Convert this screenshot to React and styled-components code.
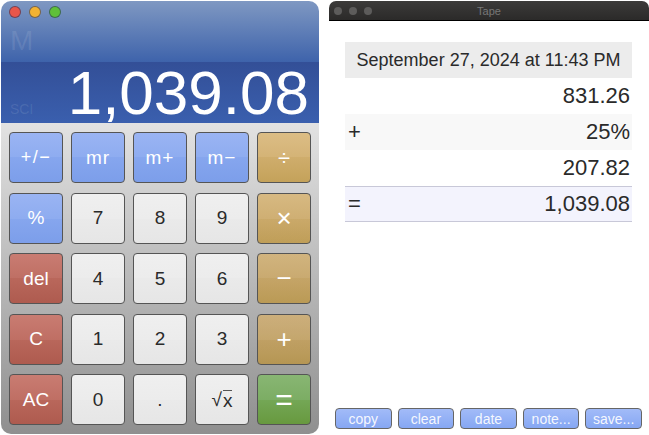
import React from 'react'
import styled, { createGlobalStyle } from 'styled-components'

const Global = createGlobalStyle`
  html, body {
    margin: 0;
    padding: 0;
    background: #fff;
    font-family: "Liberation Sans", Arial, sans-serif;
  }
  #root { width: 649px; height: 435px; overflow: hidden; }
`

const Page = styled.div`
  width: 649px;
  height: 435px;
  display: flex;
  align-items: flex-start;
  box-sizing: border-box;
  padding: 1px 0 0 1px;
  background: #fff;
`

const Calc = styled.div`
  width: 318px;
  height: 433px;
  flex: none;
  display: flex;
  flex-direction: column;
  border-radius: 10px;
  overflow: hidden;
`

const TitleArea = styled.div`
  height: 61px;
  flex: none;
  box-sizing: border-box;
  padding: 5px 8px 0;
  background: linear-gradient(#7f98c2, #3e63ab);
`

const Lights = styled.div`
  display: flex;
  gap: ${p => p.gap}px;
`

const Light = styled.span`
  width: ${p => p.size}px;
  height: ${p => p.size}px;
  border-radius: 50%;
  box-sizing: border-box;
  background: ${p => p.color};
  border: ${p => (p.ring ? '1px solid rgba(40,50,90,0.6)' : 'none')};
`

const MemoryFlag = styled.div`
  margin: 8px 0 0 1px;
  font-size: 28px;
  line-height: 29px;
  color: rgba(255, 255, 255, 0.1);
`

const Display = styled.div`
  height: 61px;
  flex: none;
  box-sizing: border-box;
  padding: 0 10px 0 8px;
  display: flex;
  justify-content: space-between;
  background: linear-gradient(#334f97, #3a5fae);
  overflow: hidden;
`

const SciFlag = styled.div`
  align-self: flex-end;
  margin: 0 0 6px 1px;
  font-size: 14px;
  line-height: 15px;
  color: rgba(255, 255, 255, 0.1);
`

const Value = styled.div`
  font-size: 62px;
  line-height: 62px;
  color: #fff;
`

const Keypad = styled.div`
  flex: 1;
  box-sizing: border-box;
  padding: 9px 9px 0 8px;
  display: grid;
  grid-template-columns: repeat(5, 54px);
  grid-auto-rows: 51px;
  column-gap: 8px;
  row-gap: 9.5px;
  background: linear-gradient(#e2e2e2, #8f8f8f);
`

const keyColors = {
  blue: ['#9ab4f3', '#8eacf0', '#86a6ee', '#7c9eea', '#fff'],
  gold: ['#dcbd85', '#d4b376', '#cfad6c', '#c4a25a', '#fff'],
  red: ['#c97c72', '#bf6f64', '#b9675b', '#ae5b4f', '#fff'],
  green: ['#88b673', '#7cad64', '#74a756', '#68993f', '#fff'],
  gray: ['#efefef', '#ececec', '#eaeaea', '#e6e6e6', '#2a2a2a'],
}

// the gold column darkens a little from row to row
const shade = p => (p.kind === 'gold' ? p.row * 0.025 : 0)

const Key = styled.div`
  display: flex;
  align-items: center;
  justify-content: center;
  box-sizing: border-box;
  border: 1px solid #555;
  border-radius: 4px;
  font-size: ${p => p.size || 19}px;
  letter-spacing: ${p => p.spacing || 0}px;
  color: ${p => keyColors[p.kind][4]};
  background:
    linear-gradient(rgba(0, 0, 0, ${shade}), rgba(0, 0, 0, ${shade})),
    linear-gradient(
      ${p => keyColors[p.kind][0]},
      ${p => keyColors[p.kind][1]} 50%,
      ${p => keyColors[p.kind][2]} 50%,
      ${p => keyColors[p.kind][3]}
    );
`

const Root = styled.span`
  border-top: 1px solid #555;
  line-height: 19px;
  margin-left: 1px;
`

const Tape = styled.div`
  width: 320px;
  height: 434px;
  margin-left: 10px;
  flex: none;
  display: flex;
  flex-direction: column;
`

const TapeBar = styled.div`
  height: 20px;
  flex: none;
  box-sizing: border-box;
  padding: 0 5px;
  display: flex;
  align-items: center;
  background: linear-gradient(#3c3b3a, #2b2a29);
  border-bottom: 1px solid #000;
  border-radius: 7px 7px 0 0;
`

const TapeTitle = styled.div`
  flex: 1;
  text-align: center;
  margin-right: 38px;
  font-size: 11px;
  color: #777;
`

const Rows = styled.div`
  flex: 1;
  margin: 21px 17px 0 16px;
`

const DateRow = styled.div`
  height: 36px;
  display: flex;
  align-items: center;
  justify-content: center;
  background: #ececec;
  font-size: 18px;
  color: #2a2a2a;
`

const Row = styled.div`
  height: 36px;
  box-sizing: border-box;
  padding: 0 2px 0 3px;
  display: flex;
  align-items: center;
  justify-content: space-between;
  font-size: 22px;
  color: #2a2a2a;
  background: ${p => (p.total ? '#f3f3fd' : p.alt ? '#f8f8f8' : '#fff')};
  border-top: ${p => (p.total ? '1px solid #c8c8d8' : 'none')};
  border-bottom: ${p => (p.total ? '1px solid #c8c8d8' : 'none')};
`

const TapeButtons = styled.div`
  display: flex;
  gap: 6px;
  padding: 0 7px 6px 6px;
`

const TapeButton = styled.div`
  flex: 1;
  height: 21px;
  box-sizing: border-box;
  display: flex;
  align-items: center;
  justify-content: center;
  border: 1px solid #666;
  border-radius: 4px;
  font-size: 14px;
  color: rgba(255, 255, 255, 0.92);
  background: linear-gradient(#a2bbf8, #86a7f3);
`

const keys = [
  ['+/−', 'blue', 18, 1.5], ['mr', 'blue', 19, 1], ['m+', 'blue', 19, 1], ['m−', 'blue', 19, 1], ['÷', 'gold', 22],
  ['%', 'blue'], ['7', 'gray'], ['8', 'gray'], ['9', 'gray'], ['×', 'gold', 26],
  ['del', 'red'], ['4', 'gray'], ['5', 'gray'], ['6', 'gray'], ['−', 'gold', 26],
  ['C', 'red'], ['1', 'gray'], ['2', 'gray'], ['3', 'gray'], ['+', 'gold', 26],
  ['AC', 'red'], ['0', 'gray'], ['.', 'gray'], ['sqrt', 'gray'], ['=', 'green', 30],
]

const tapeRows = [
  { op: '', value: '831.26' },
  { op: '+', value: '25%', alt: true },
  { op: '', value: '207.82' },
  { op: '=', value: '1,039.08', total: true },
]

export default function App() {
  return (
    <Page>
      <Global />
      <Calc>
        <TitleArea>
          <Lights gap={8}>
            <Light size={12} ring color="#e8564a" />
            <Light size={12} ring color="#f2b233" />
            <Light size={12} ring color="#5fc03a" />
          </Lights>
          <MemoryFlag>M</MemoryFlag>
        </TitleArea>
        <Display>
          <SciFlag>SCI</SciFlag>
          <Value>1,039.08</Value>
        </Display>
        <Keypad>
          {keys.map(([label, kind, size, spacing], i) => (
            <Key key={label} kind={kind} size={size} spacing={spacing} row={Math.floor(i / 5)}>
              {label === 'sqrt' ? <>√<Root>x</Root></> : label}
            </Key>
          ))}
        </Keypad>
      </Calc>
      <Tape>
        <TapeBar>
          <Lights gap={7}>
            <Light size={8} color="#5d5c5b" />
            <Light size={8} color="#5d5c5b" />
            <Light size={8} color="#5d5c5b" />
          </Lights>
          <TapeTitle>Tape</TapeTitle>
        </TapeBar>
        <Rows>
          <DateRow>September 27, 2024 at 11:43 PM</DateRow>
          {tapeRows.map(r => (
            <Row key={r.value} alt={r.alt} total={r.total}>
              <span>{r.op}</span>
              <span>{r.value}</span>
            </Row>
          ))}
        </Rows>
        <TapeButtons>
          <TapeButton>copy</TapeButton>
          <TapeButton>clear</TapeButton>
          <TapeButton>date</TapeButton>
          <TapeButton>note...</TapeButton>
          <TapeButton>save...</TapeButton>
        </TapeButtons>
      </Tape>
    </Page>
  )
}
